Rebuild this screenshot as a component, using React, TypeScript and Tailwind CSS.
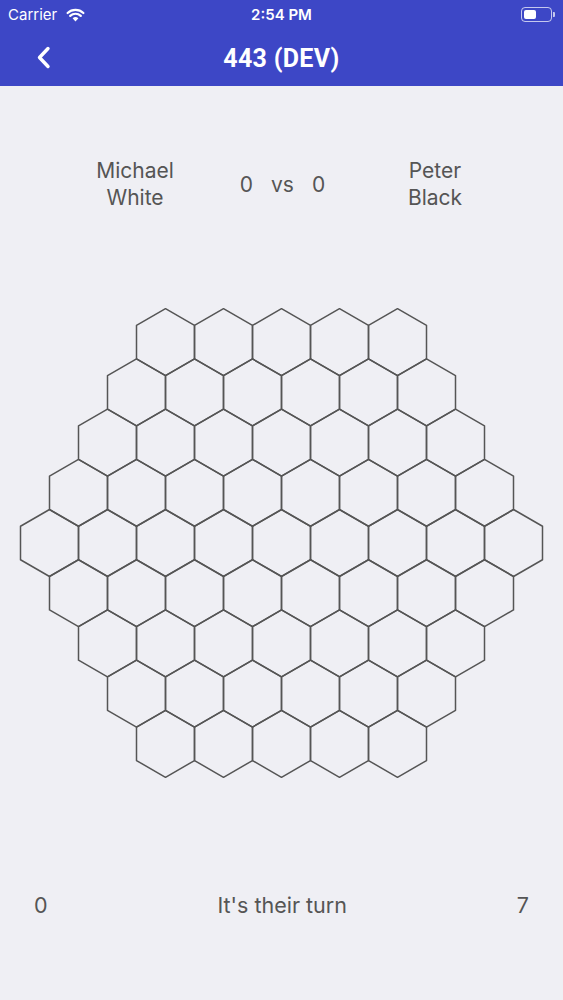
import React from "react";

const S = 33.5;
const W = 58;
const CX = 281.5;
const CY = 244; // within svg (svg top at 300)
const DY = 50.2;

function hexPoints(cx: number, cy: number) {
  const pts = [
    [cx, cy - S],
    [cx + W / 2, cy - S / 2],
    [cx + W / 2, cy + S / 2],
    [cx, cy + S],
    [cx - W / 2, cy + S / 2],
    [cx - W / 2, cy - S / 2],
  ];
  return pts.map((p) => `${p[0].toFixed(2)},${p[1].toFixed(2)}`).join(" ");
}

function Board() {
  const hexes: string[] = [];
  for (let r = 0; r < 9; r++) {
    const count = 9 - Math.abs(r - 4);
    const cy = CY + (r - 4) * DY;
    for (let i = 0; i < count; i++) {
      const cx = CX + (i - (count - 1) / 2) * W;
      hexes.push(hexPoints(cx, cy));
    }
  }
  return (
    <svg width="563" height="490" viewBox="0 0 563 490" className="block">
      {hexes.map((p, i) => (
        <polygon key={i} points={p} fill="none" stroke="#555555" strokeWidth="1.5" strokeLinejoin="round" />
      ))}
    </svg>
  );
}

export default function App() {
  return (
    <div
      className="w-[563px] h-[1000px] bg-[#efeff4] overflow-hidden flex flex-col"
      style={{ fontFamily: 'Inter, "Noto Sans", sans-serif' }}
    >
      <div className="bg-[#3d47c6] h-[86px] flex flex-col text-white">
        <div className="h-[30px] relative flex items-center justify-center">
          <div className="absolute left-[8px] top-[4px] flex items-center gap-[9px] text-[15px]">
            <span>Carrier</span>
            <svg width="19" height="14" viewBox="0 0 19 14">
              <path d="M9.5 13.5 L6.6 10.3 A4.2 4.2 0 0 1 12.4 10.3 Z" fill="white" />
              <path d="M4.2 7.9 A7.6 7.6 0 0 1 14.8 7.9" stroke="white" strokeWidth="2.2" fill="none" strokeLinecap="round" />
              <path d="M1.6 5 A11.4 11.4 0 0 1 17.4 5" stroke="white" strokeWidth="2.2" fill="none" strokeLinecap="round" />
            </svg>
          </div>
          <span className="text-[15px] font-semibold">2:54 PM</span>
          <div className="absolute right-[8px] top-[7px] flex items-center">
            <div className="w-[31px] h-[15px] rounded-[4px] border border-white/70 p-[2px]">
              <div className="w-[12px] h-full bg-white rounded-[2px]" />
            </div>
            <div className="w-[2px] h-[5px] bg-white/70 rounded-r-[1px] ml-[1px]" />
          </div>
        </div>
        <div className="flex-1 relative flex items-center justify-center">
          <svg className="absolute left-[36px] top-[16px]" width="15" height="23" viewBox="0 0 15 23">
            <path d="M12 2.5 L3.5 11.5 L12 20.5" stroke="white" strokeWidth="3.4" fill="none" strokeLinecap="round" strokeLinejoin="round" />
          </svg>
          <span className="text-[25px] font-bold tracking-[0.3px] leading-none" style={{ fontFamily: 'Roboto, Inter, sans-serif' }}>443 (DEV)</span>
        </div>
      </div>

      <div className="flex pt-[71px] pl-[60px] text-[#555] text-[21px] leading-[27px]">
        <div className="w-[150px] text-center">
          Michael
          <br />
          White
        </div>
        <div className="w-[145px] flex items-center justify-center gap-[18px]">
          <span>0</span>
          <span>vs</span>
          <span>0</span>
        </div>
        <div className="w-[160px] text-center">
          Peter
          <br />
          Black
        </div>
      </div>

      <div className="mt-[88px]">
        <Board />
      </div>

      <div className="mt-[103px] flex justify-between px-[34px] text-[#555] text-[21.5px] leading-[27px]">
        <span>0</span>
        <span>It's their turn</span>
        <span>7</span>
      </div>
    </div>
  );
}
